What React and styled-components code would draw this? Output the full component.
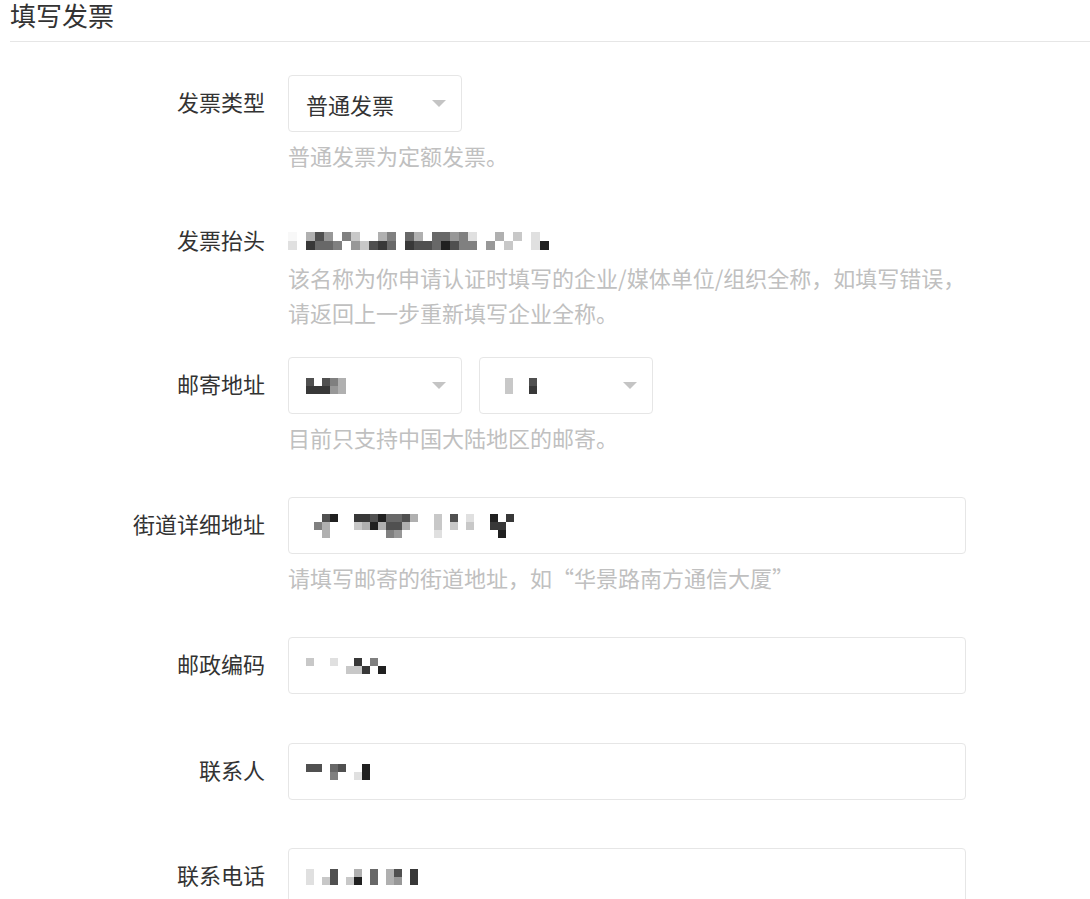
import React from 'react'
import styled, { createGlobalStyle } from 'styled-components'

const GlobalStyle = createGlobalStyle`
  body {
    margin: 0;
    background: #fff;
    font-family: "Noto Sans CJK SC", "Noto Sans", sans-serif;
    color: #333;
  }
`

// redacted values, drawn as grey pixel blocks (0 = light, 9 = dark, . = empty)
const shade = c => {
  if (c === '.') return 'transparent'
  const v = 248 - Number(c) * 24
  return `rgb(${v},${v},${v})`
}

function Mosaic({ rows, size = 8 }) {
  return (
    <MosaicGrid $size={size} $cols={rows[0].length}>
      {rows.flatMap((r, i) =>
        r.split('').map((c, j) => <Cell key={i + '-' + j} style={{ background: shade(c) }} />)
      )}
    </MosaicGrid>
  )
}

function Select({ children }) {
  return (
    <SelectBox>
      <SelectValue>{children}</SelectValue>
      <Caret />
    </SelectBox>
  )
}

export default function App() {
  return (
    <Page>
      <GlobalStyle />
      <Title>填写发票</Title>

      <Form>
        <FormItem>
          <Label>发票类型</Label>
          <Field>
            <Select>普通发票</Select>
            <Hint>普通发票为定额发票。</Hint>
          </Field>
        </FormItem>

        <FormItem $mb={27}>
          <Label $compact>发票抬头</Label>
          <Field>
            <StaticValue>
              <Mosaic
                size={9}
                rows={[
                  '0.374.52..35.63.66451..3.2.1..',
                  '1.8665.42786.87769755.4.2..19.',
                ]}
              />
            </StaticValue>
            <Hint $tight>
              该名称为你申请认证时填写的企业/媒体单位/组织全称，如填写错误，
              <br />
              请返回上一步重新填写企业全称。
            </Hint>
          </Field>
        </FormItem>

        <FormItem>
          <Label>邮寄地址</Label>
          <Field>
            <SelectRow>
              <Select>
                <Mosaic rows={['7.753', '88843']} />
              </Select>
              <Select>
                <Mosaic rows={['.2..7', '.2..8']} />
              </Select>
            </SelectRow>
            <Hint>目前只支持中国大陆地区的邮寄。</Hint>
          </Field>
        </FormItem>

        <FormItem>
          <Label>街道详细地址</Label>
          <Field>
            <InputBox>
              <Mosaic
                rows={[
                  '..79..88796673..2.7.1..9.8.',
                  '.53...2393773...2.2.2..88..',
                  '..3.......54....1.......9..',
                ]}
              />
            </InputBox>
            <Hint>请填写邮寄的街道地址，如“华景路南方通信大厦”</Hint>
          </Field>
        </FormItem>

        <FormItem $mb={49}>
          <Label>邮政编码</Label>
          <Field>
            <InputBox>
              <Mosaic rows={['2..1..8.5.', '.....228.9']} />
            </InputBox>
          </Field>
        </FormItem>

        <FormItem $mb={48}>
          <Label>联系人</Label>
          <Field>
            <InputBox>
              <Mosaic rows={['77.67..9', '...5..19']} />
            </InputBox>
          </Field>
        </FormItem>

        <FormItem $mb={0}>
          <Label>联系电话</Label>
          <Field>
            <InputBox>
              <Mosaic rows={['1..7..3.6.37.8.', '1.27.29.6.34.8.']} />
            </InputBox>
          </Field>
        </FormItem>
      </Form>
    </Page>
  )
}

const Page = styled.div`
  padding-left: 10px;
`

const Title = styled.h2`
  margin: 0;
  font-size: 26px;
  font-weight: 400;
  line-height: 30px;
  padding-bottom: 11px;
  border-bottom: 1px solid #e6e6e6;
  color: #333;
`

const Form = styled.div`
  padding-top: 33px;
`

const FormItem = styled.div`
  display: flex;
  align-items: flex-start;
  margin-bottom: ${props => (props.$mb !== undefined ? props.$mb : 42)}px;
`

const Label = styled.div`
  width: 255px;
  flex-shrink: 0;
  margin-right: 23px;
  text-align: right;
  font-size: 22px;
  color: #333;
  line-height: ${props => (props.$compact ? '32px' : '53px')};
  padding-top: ${props => (props.$compact ? '8px' : '0')};
`

const Field = styled.div`
  display: flex;
  flex-direction: column;
  align-items: flex-start;
`

const StaticValue = styled.div`
  height: 32px;
  padding-top: 10px;
  display: flex;
  align-items: center;
`

const Hint = styled.div`
  margin-top: ${props => (props.$tight ? '3px' : '6px')};
  font-size: 22px;
  line-height: 35px;
  color: #c0c0c0;
`

const SelectRow = styled.div`
  display: flex;
  gap: 17px;
`

const SelectBox = styled.div`
  box-sizing: border-box;
  width: 174px;
  height: 57px;
  padding: 0 15px 0 17px;
  display: flex;
  align-items: center;
  justify-content: space-between;
  border: 1px solid #e6e6e6;
  border-radius: 4px;
  background: #fff;
`

const SelectValue = styled.span`
  display: flex;
  align-items: center;
  font-size: 22px;
  color: #333;
`

const Caret = styled.span`
  width: 0;
  height: 0;
  border-left: 7px solid transparent;
  border-right: 7px solid transparent;
  border-top: 7px solid #c4c4c4;
`

const InputBox = styled.div`
  box-sizing: border-box;
  width: 678px;
  height: 57px;
  padding: 0 17px;
  display: flex;
  align-items: center;
  border: 1px solid #e6e6e6;
  border-radius: 4px;
  background: #fff;
`

const MosaicGrid = styled.div`
  display: inline-grid;
  grid-template-columns: repeat(${props => props.$cols}, ${props => props.$size}px);
  grid-auto-rows: ${props => props.$size}px;
`

const Cell = styled.span`
  display: block;
`
